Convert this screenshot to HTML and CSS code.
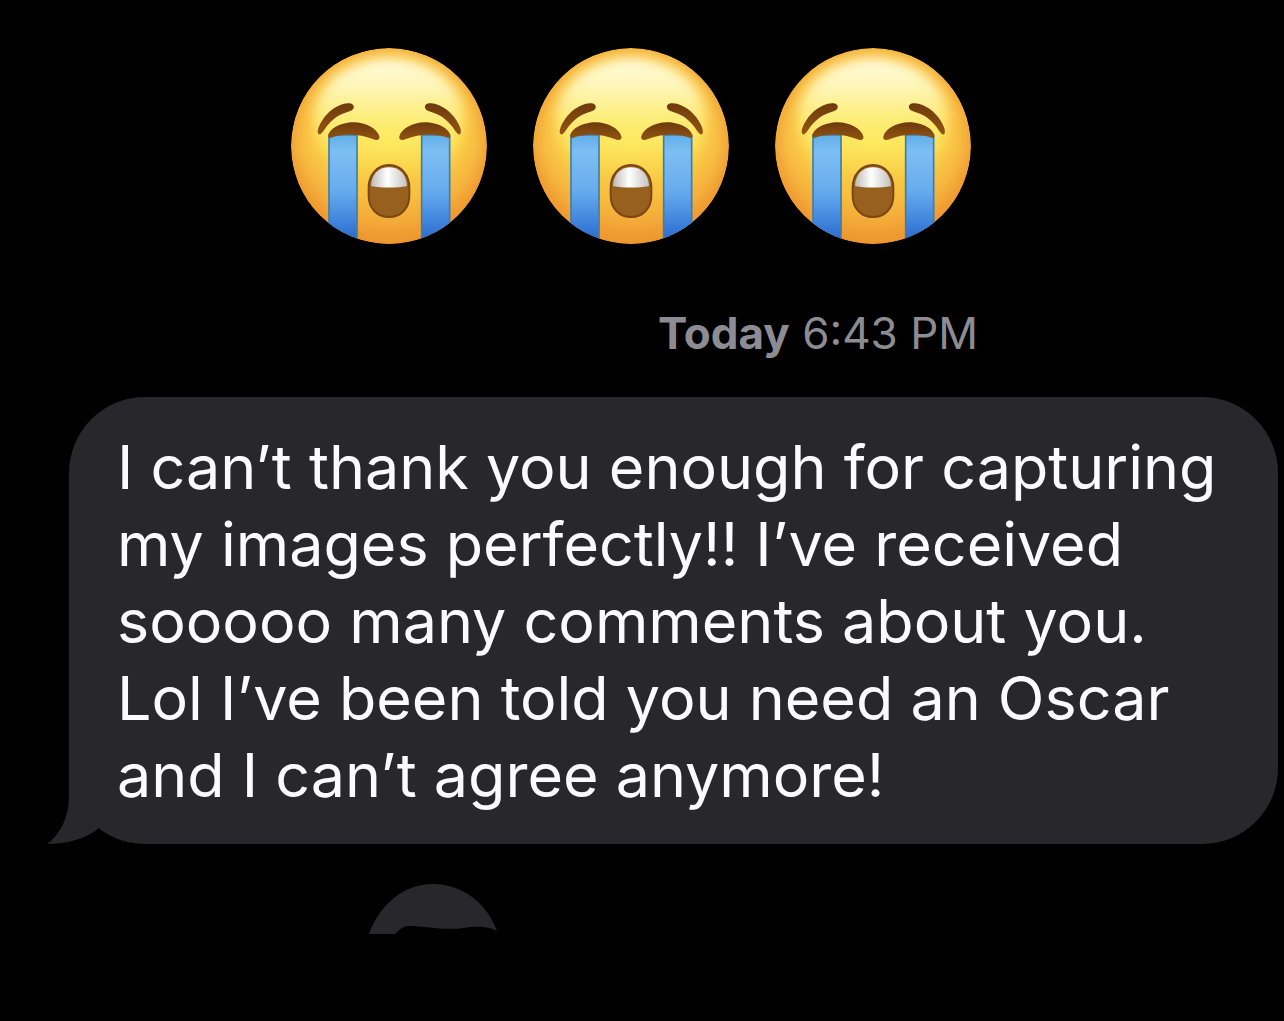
FILE: index.html
```html
<!DOCTYPE html>
<html lang="en">
<head>
<meta charset="utf-8">
<meta name="viewport" content="width=device-width, initial-scale=1">
<title>Messages</title>
<link rel="stylesheet" href="styles.css">
</head>
<body>
<svg class="defs" aria-hidden="true">
  <defs>
    <radialGradient id="face" gradientUnits="userSpaceOnUse" cx="327" cy="310" r="315">
      <stop offset="0" stop-color="#fbe04f"/>
      <stop offset=".6" stop-color="#fbd54a"/>
      <stop offset=".82" stop-color="#f8be43"/>
      <stop offset="1" stop-color="#ec962f"/>
    </radialGradient>
    <linearGradient id="shine" x1="0" y1="0" x2="0" y2="1">
      <stop offset="0" stop-color="#fffbdc"/>
      <stop offset=".25" stop-color="#fff9c0" stop-opacity=".9"/>
      <stop offset=".6" stop-color="#fff47a" stop-opacity=".6"/>
      <stop offset="1" stop-color="#fdec60" stop-opacity="0"/>
    </linearGradient>
    <linearGradient id="warm" x1="0" y1="0" x2="0" y2="1">
      <stop offset=".5" stop-color="#f0962c" stop-opacity="0"/>
      <stop offset="1" stop-color="#ee962f" stop-opacity=".7"/>
    </linearGradient>
    <linearGradient id="tear" x1="0" y1="0" x2="0" y2="1">
      <stop offset="0" stop-color="#5fafe9"/>
      <stop offset=".15" stop-color="#7dbef3"/>
      <stop offset=".5" stop-color="#68acee"/>
      <stop offset=".8" stop-color="#3e82dc"/>
      <stop offset="1" stop-color="#2563c8"/>
    </linearGradient>
    <linearGradient id="teeth" x1="0" y1="0" x2="1" y2="0">
      <stop offset="0" stop-color="#bdbbb9"/>
      <stop offset=".45" stop-color="#fff"/>
      <stop offset="1" stop-color="#c4c2c0"/>
    </linearGradient>
    <linearGradient id="brow" x1="0" y1="0" x2="0" y2="1">
      <stop offset="0" stop-color="#6e3a0b"/>
      <stop offset="1" stop-color="#925414"/>
    </linearGradient>
    <filter id="soft" x="-15%" y="-15%" width="130%" height="130%"><feGaussianBlur stdDeviation="16"/></filter>
    <clipPath id="disc"><circle cx="327" cy="331" r="294"/></clipPath>
    <g id="half">
      <path d="M114 293c-3-8 2-22 12-38 17-27 47-50 77-52 13-1 20 6 18 13-2 8-13 11-25 15-27 9-48 27-63 51-7 11-16 19-19 11z" fill="url(#brow)"/>
      <path d="M147 298h84v330h-84z" fill="url(#tear)" stroke="#3e7fa8" stroke-width="5"/>
      <path d="M145 302c0-22 38-42 76-42 37 0 71 20 77 42 3 12-9 13-20 8-34-14-78-17-116-7-12 4-17 7-17-1z" fill="url(#brow)"/>
    </g>
    <symbol id="crying" viewBox="33 37 588 588">
      <g clip-path="url(#disc)">
        <circle cx="327" cy="331" r="294" fill="url(#face)"/>
        <circle cx="327" cy="331" r="294" fill="url(#warm)"/>
        <ellipse cx="327" cy="250" rx="226" ry="182" fill="url(#shine)" filter="url(#soft)"/>
        <use href="#half"/>
        <use href="#half" transform="translate(656 0) scale(-1 1)"/>
        <path d="M327 388c36 0 61 30 61 67v25c0 37-25 64-61 64s-61-27-61-64v-25c0-37 25-67 61-67z" fill="#98601e" stroke="#7a4614" stroke-width="6"/>
        <path d="M273 451c1-34 22-56 54-56s53 22 54 56c-30 6-78 6-108 0z" fill="url(#teeth)"/>
      </g>
    </symbol>
  </defs>
</svg>
<main class="thread">
  <div class="emojis" role="img" aria-label="Three loudly crying faces">
    <svg class="emoji"><use href="#crying"/></svg>
    <svg class="emoji"><use href="#crying"/></svg>
    <svg class="emoji"><use href="#crying"/></svg>
  </div>
  <p class="stamp"><strong>Today</strong> <time datetime="18:43">6:43 PM</time></p>
  <div class="bubble">
    <svg class="tail" viewBox="0 0 52 80" aria-hidden="true">
      <path d="M22 0v32C22 52 14 70 0 80c19 0 38-5 51-15V40z" fill="#28272b"/>
    </svg>
    <p class="message">I can’t thank you enough for capturing my images perfectly!! I’ve received sooooo many comments about you. Lol I’ve been told you need an Oscar and I can’t agree anymore!</p>
  </div>
  <svg class="peek" viewBox="0 0 128 52" aria-hidden="true">
    <path d="M0 50C11 20 35 0 64 0s54 19 64 47c-9-5-20-5-34-3-20 3-42-3-55-2-8 1-10 6-13 8z" fill="#28272b"/>
  </svg>
</main>
</body>
</html>
```
FILE: styles.css
```css
* {
  box-sizing: border-box;
}

body {
  margin: 0;
  min-height: 100vh;
  background: #000;
  color: #fbfaff;
  font-family: Inter, "Liberation Sans", sans-serif;
}

p {
  margin: 0;
}

.defs {
  position: absolute;
  width: 0;
  height: 0;
}

.thread {
  display: flex;
  flex-direction: column;
  padding: 48px 6px 48px 69px;
}

.emojis {
  display: flex;
  gap: 46px;
  padding-left: 222px;
}

.emoji {
  width: 196px;
  height: 196px;
}

.stamp {
  align-self: flex-end;
  margin-top: 64px;
  padding-right: 300px;
  color: #8d8c92;
  font-size: 44px;
  line-height: 50px;
}

.bubble {
  position: relative;
  margin-top: 39px;
  padding: 32px 48px 30px;
  border-radius: 76px;
  background: #28272b;
}

.message {
  font-size: 61px;
  line-height: 77px;
}

.tail {
  position: absolute;
  left: -22px;
  bottom: 0;
  width: 52px;
  height: 80px;
}

.peek {
  width: 128px;
  height: 52px;
  margin: 40px 0 0 300px;
}
```
